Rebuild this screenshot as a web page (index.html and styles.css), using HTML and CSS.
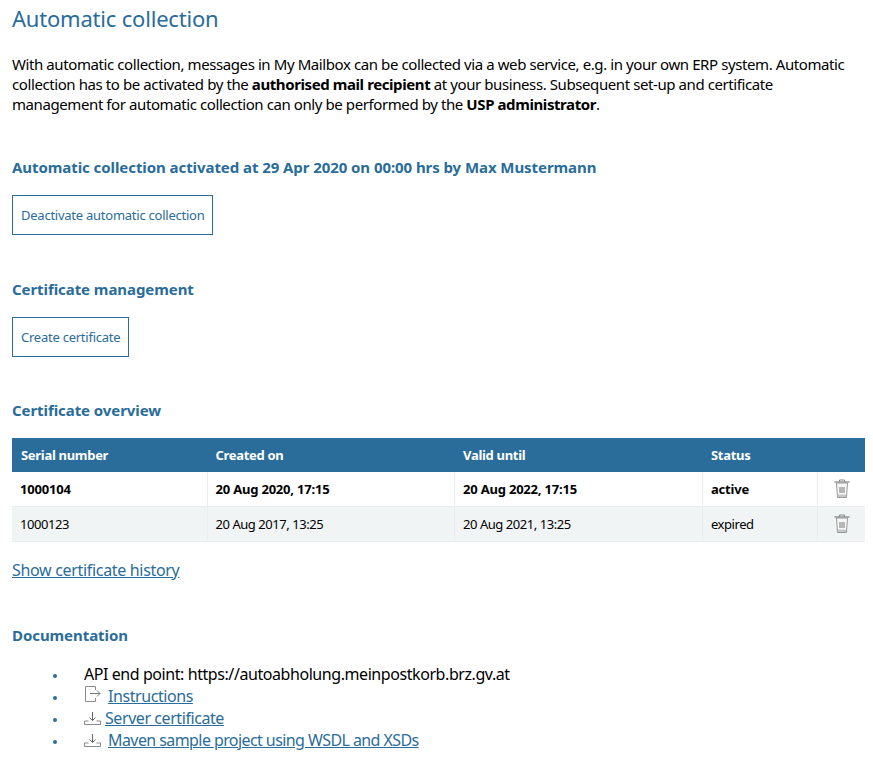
FILE: index.html
```html
<!DOCTYPE html>
<html lang="en">
<head>
<meta charset="utf-8">
<title>Automatic collection</title>
<link rel="stylesheet" href="styles.css">
</head>
<body>
<h1 class="title">Automatic collection</h1>
<p class="intro">With automatic collection, messages in My Mailbox can be collected via a web service, e.g. in your own ERP system. Automatic collection has to be activated by the <strong>authorised mail recipient</strong> at your business. Subsequent set-up and certificate management for automatic collection can only be performed by the <strong>USP administrator</strong>.</p>

<h2 class="heading heading-status">Automatic collection activated at 29 Apr 2020 on 00:00 hrs by Max Mustermann</h2>
<button class="btn" type="button">Deactivate automatic collection</button>

<h2 class="heading heading-cert">Certificate management</h2>
<button class="btn" type="button">Create certificate</button>

<h2 class="heading heading-over">Certificate overview</h2>
<table class="certs">
<colgroup><col class="c1"><col class="c2"><col class="c3"><col class="c4"><col class="c5"></colgroup>
<thead>
<tr><th>Serial number</th><th>Created on</th><th>Valid until</th><th>Status</th><th></th></tr>
</thead>
<tbody>
<tr class="current"><td>1000104</td><td>20 Aug 2020, 17:15</td><td>20 Aug 2022, 17:15</td><td>active</td>
<td class="action"><svg class="trash" viewBox="0 0 16 20" width="16" height="20"><use href="#trash"/></svg></td></tr>
<tr class="alt"><td>1000123</td><td>20 Aug 2017, 13:25</td><td>20 Aug 2021, 13:25</td><td>expired</td>
<td class="action"><svg class="trash" viewBox="0 0 16 20" width="16" height="20"><use href="#trash"/></svg></td></tr>
</tbody>
</table>
<a class="history" href="#">Show certificate history</a>

<h2 class="heading heading-doc">Documentation</h2>
<ul class="docs">
<li>API end point: https://autoabholung.meinpostkorb.brz.gv.at</li>
<li><svg class="ico ico-ext" viewBox="0 0 18 17" width="18" height="17"><path d="M11.5 4V.5H1.5v15h10V12" fill="none" stroke="#8a8a8a"/><path d="M6 7.5h10M13 4.5l3 3-3 3" fill="none" stroke="#777"/></svg><a href="#">Instructions</a></li>
<li><svg class="ico" viewBox="0 0 17 13" width="17" height="13"><use href="#dl"/></svg><a href="#">Server certificate</a></li>
<li><svg class="ico ico-wide" viewBox="0 0 17 13" width="17" height="13"><use href="#dl"/></svg><a class="tight" href="#">Maven sample project using WSDL and XSDs</a></li>
</ul>

<svg class="defs" width="0" height="0" aria-hidden="true">
<symbol id="trash" viewBox="0 0 16 20">
<path d="M5.5 2.5V1h5v1.5" fill="none" stroke="#888"/>
<path d="M.5 3h15" stroke="#666" fill="none"/>
<path d="M2.5 4l1 14.5h9l1-14.5z" fill="#f7f7f7" stroke="#999"/>
<path d="M4 15.5h8v2.5H4z" fill="#c6c6c6"/>
<path d="M6 8v6M8 8v6M10 8v6" stroke="#777" fill="none"/>
</symbol>
<symbol id="dl" viewBox="0 0 17 13">
<path d="M.5 12.5h16M.5 12.5V9h4M16.5 12.5V9h-4" fill="none" stroke="#8a8a8a"/>
<path d="M8.5 0v8.5M5.5 5.5l3 3 3-3" fill="none" stroke="#666"/>
</symbol>
</svg>
</body>
</html>
```
FILE: styles.css
```css
* { box-sizing: border-box; }
html, body { margin: 0; padding: 0; }
body {
  padding: 0 8px 0 12px;
  background: #fff;
  color: #000;
  font-family: "Noto Sans", "Open Sans", sans-serif;
  font-size: 15px;
  line-height: 20px;
}
.title {
  margin: 5px 0 0;
  height: 27px;
  font-size: 22px;
  line-height: 27px;
  font-weight: 400;
  color: #2a6c9a;
  letter-spacing: -0.2px;
}
.intro { margin: 22px 0 0; letter-spacing: -0.41px; }
.heading {
  margin: 0;
  font-size: 15px;
  line-height: 20px;
  font-weight: 700;
  color: #2a6c9a;
  letter-spacing: -0.07px;
}
.heading-status { margin-top: 43px; }
.heading-cert { margin-top: 44px; }
.heading-over { margin-top: 43px; }
.heading-doc { margin-top: 45px; }
.btn {
  display: block;
  margin-top: 18px;
  height: 40px;
  padding: 0 8px;
  border: 1px solid #2a6c9a;
  background: #fff;
  color: #2a6c9a;
  font: inherit;
  font-size: 13px;
  letter-spacing: -0.245px;
}
.certs {
  width: 853px;
  margin-top: 18px;
  border-collapse: separate;
  border-spacing: 0;
  table-layout: fixed;
  font-size: 13px;
  letter-spacing: -0.45px;
}
.c1 { width: 195.5px; }
.c2 { width: 247.5px; }
.c3 { width: 248px; }
.c4 { width: 115px; }
.c5 { width: 47px; }
.certs th {
  height: 34px;
  padding: 0 8px;
  background: #2a6c9a;
  color: #fff;
  text-align: left;
  font-weight: 700;
  letter-spacing: -0.3px;
}
.certs th:first-child { padding-left: 9px; }
.certs td {
  height: 35px;
  padding: 0 8px;
  border-right: 1px solid #e8eded;
  border-bottom: 1px solid #e8eded;
}
.certs td:last-child { border-right: 0; }
.current td { font-weight: 700; letter-spacing: -0.2px; }
.alt td { background: #f0f4f4; }
.action { text-align: center; }
.trash { display: block; margin: 0 auto; }
.history {
  display: block;
  margin-top: 18px;
  width: max-content;
  font-size: 16px;
  letter-spacing: -0.32px;
}
a { color: #2a6c9a; text-decoration: underline; }
.tight { letter-spacing: -0.58px; }
.docs {
  margin: 18px 0 0;
  padding: 0 0 0 72px;
  list-style: none;
  font-size: 16px;
  letter-spacing: -0.43px;
}
.docs li {
  position: relative;
  height: 22px;
  line-height: 22px;
}
.docs li::before {
  content: "";
  position: absolute;
  left: -31px;
  top: 11px;
  width: 4px;
  height: 4px;
  border-radius: 50%;
  background: #2a6c9a;
}
.ico { margin-right: 4px; vertical-align: -1px; }
.ico-wide { margin-right: 7px; }
.ico-ext { margin-right: 6px; }
.defs { position: absolute; }
```
